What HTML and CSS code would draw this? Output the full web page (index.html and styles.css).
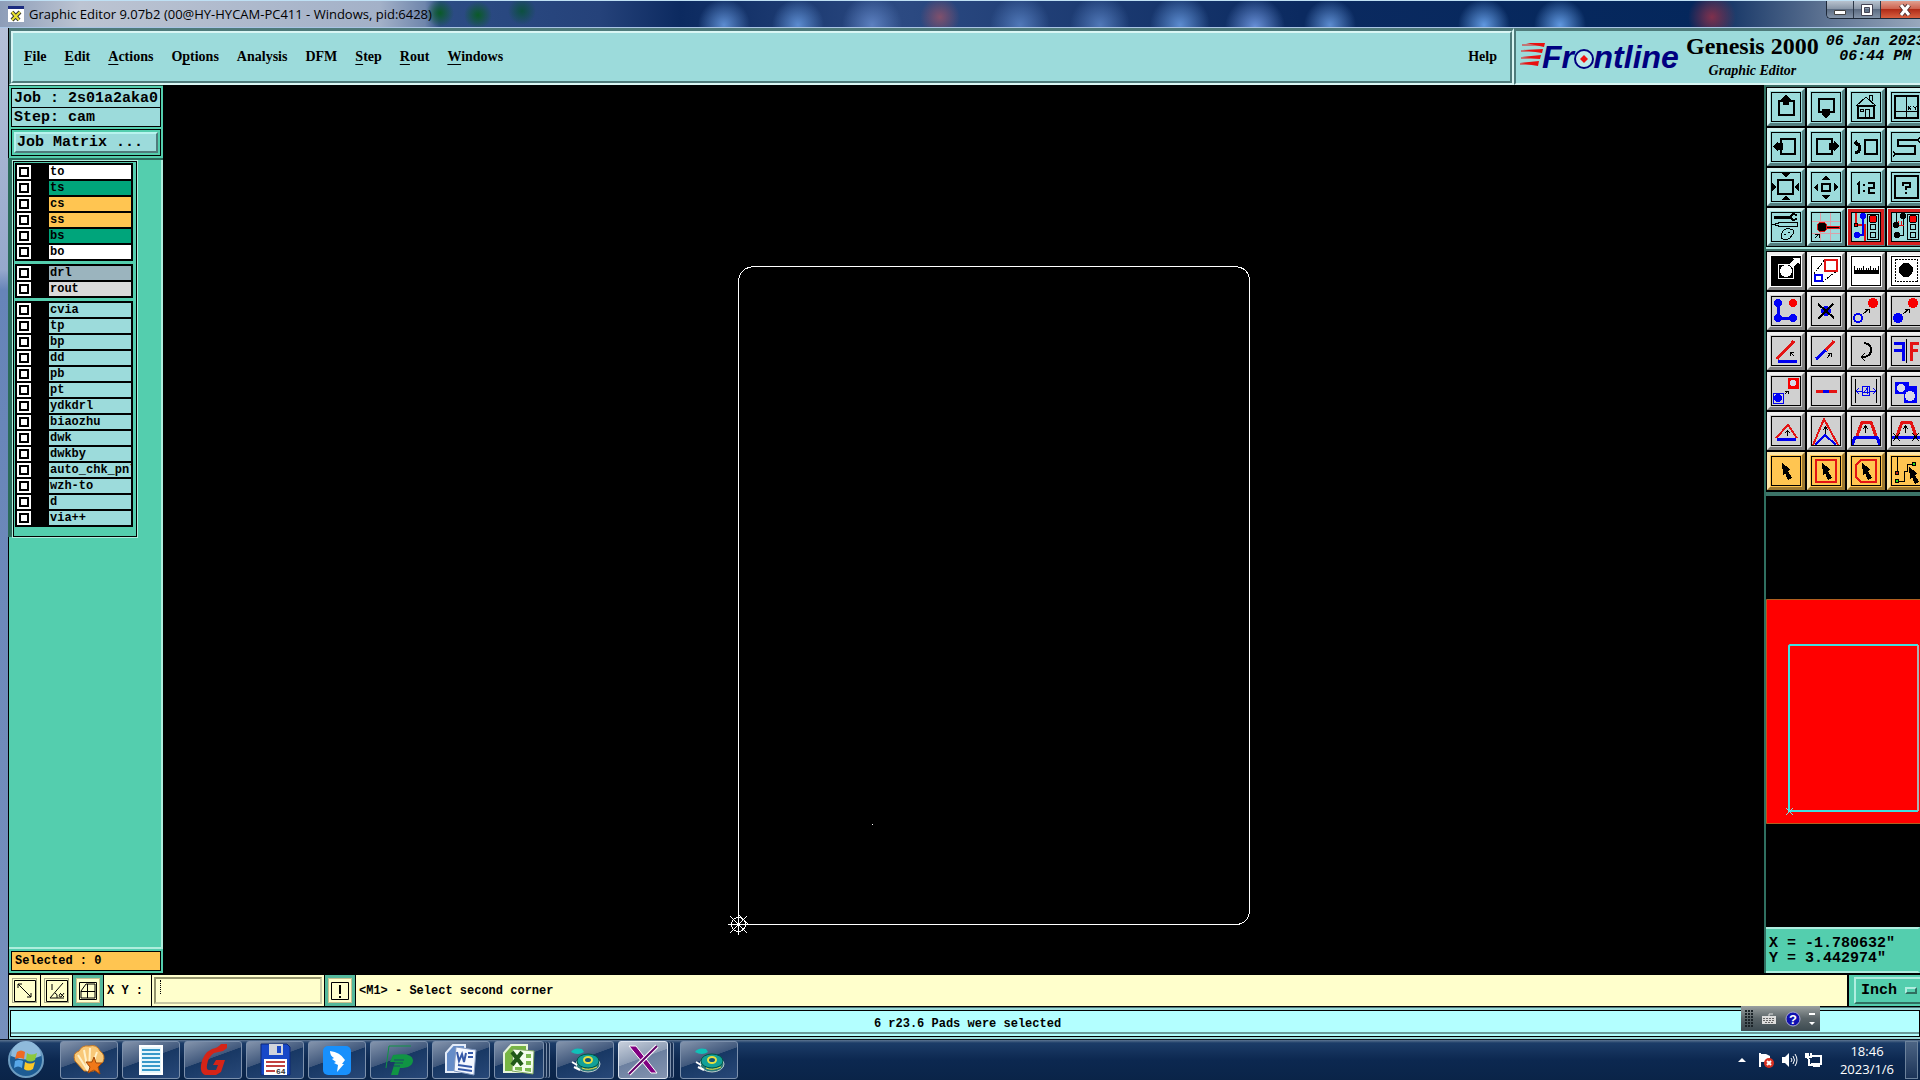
FILE: index.html
```html
<!doctype html>
<html lang="en">
<head>
  <meta charset="UTF-8">
  <meta name="viewport" content="width=device-width, initial-scale=1">
  <title>Graphic Editor 9.07b2</title>

  <link rel="stylesheet" href="styles.css">
</head>
<body>

<svg class="defs" width="0" height="0">
  <symbol id="cursor" viewBox="0 0 30 30"><path class="k" d="M11 7L19 13L17 15L21 22L17 24L14 17L12 19Z"/></symbol>
  <symbol id="disc" viewBox="0 0 34 34">
    <ellipse cx="20" cy="21" rx="12" ry="8" fill="#2a7a78" stroke="#bcc"/>
    <ellipse cx="20" cy="18" rx="11" ry="7" fill="#12a098" stroke="#054"/>
    <ellipse cx="20" cy="17" rx="4" ry="3" fill="#157" stroke="#e8e040" stroke-width="2"/>
    <path d="M3 9Q6 4 14 6L16 9Q10 13 3 9Z" fill="#10c0b8" stroke="none"/>
    <path d="M4 19L9 22M6 24L12 27" stroke="#fff" stroke-width="2"/>
    <path d="M14 25Q20 28 29 24" stroke="#e8e040" fill="none"/>
  </symbol>
</svg>

<header class="titlebar">
  <svg width="16" height="16" viewBox="0 0 16 16">
    <path fill="#fff" d="M0 0H16V16H0Z"/>
    <path fill="#1c2c80" d="M0 0H16V3H0Z"/>
    <path stroke="#333" stroke-width="4" d="M4 6L11 14M12 6L4 14"/>
    <path stroke="#e8e030" stroke-width="2" d="M4 6L11 14M12 6L4 14"/>
  </svg>
  <h1>Graphic Editor 9.07b2 (00@HY-HYCAM-PC411 - Windows, pid:6428)</h1>
  <div class="window-buttons">
    <button aria-label="Minimize"><svg width="14" height="12"><path fill="#fff" stroke="#444" d="M1.500 6.500H12.500V10.500H1.500Z"/></svg></button>
    <button aria-label="Maximize"><svg width="14" height="12"><path stroke="#fff" stroke-width="3" fill="none" d="M3 2H11V10H3Z"/><path stroke="#445" fill="none" d="M1.500 .5H12.500V11.500H1.500ZM4.500 3.500H9.500V8.500H4.500Z"/></svg></button>
    <button class="close" aria-label="Close"><svg width="14" height="12"><path stroke="#533" stroke-width="5" d="M3 1L11 11M11 1L3 11"/><path stroke="#fff" stroke-width="3" d="M3 1L11 11M11 1L3 11"/></svg></button>
  </div>
</header>

<main class="window">
  <div class="top">
    <nav class="menubar">
      <div class="menu">
        <a href="#"><u>F</u>ile</a>
        <a href="#"><u>E</u>dit</a>
        <a href="#"><u>A</u>ctions</a>
        <a href="#">O<u>p</u>tions</a>
        <a href="#">Analysis</a>
        <a href="#">DFM</a>
        <a href="#"><u>S</u>tep</a>
        <a href="#"><u>R</u>out</a>
        <a href="#"><u>W</u>indows</a>
        <a href="#" class="help">Help</a>
      </div>
    </nav>
    <div class="brand">
      <svg class="logo" width="164" height="42" viewBox="0 -6 164 42">
        <path fill="#e81010" d="M6 2L25 2L24 6ZM3 9L23 8L22 12ZM2 16L21 14L20 18ZM0 22L19 20L18 25Z"/>
        <path stroke="#e81010" d="M2 4H24M1 10H22M1 17H20M0 23H18"/>
        <text x="22" y="27">Fr<tspan class="hidden-o">o</tspan>ntline</text>
        <circle cx="64" cy="18" r="9" fill="#bdeaea" stroke="#000080" stroke-width="2"/>
        <path fill="#f01010" d="M64 14L68 18L64 22L60 18Z"/>
      </svg>
      <div class="product">
        <strong>Genesis 2000</strong>
        <em>Graphic Editor</em>
      </div>
      <time>06 Jan 2023<br>06:44 PM</time>
    </div>
  </div>

  <div class="workspace">
    <aside class="sidebar">
      <div class="job">
        <div class="field">Job : 2s01a2aka0</div>
        <div class="field">Step: cam</div>
        <div class="matrix"><button>Job Matrix ...</button></div>
      </div>
      <div class="layers">
        <div class="layer-frame">
          <div class="group">
            <label><input type="checkbox"><span class="white">to</span></label>
            <label><input type="checkbox"><span class="green">ts</span></label>
            <label><input type="checkbox"><span class="amber">cs</span></label>
            <label><input type="checkbox"><span class="amber">ss</span></label>
            <label><input type="checkbox"><span class="green">bs</span></label>
            <label><input type="checkbox"><span class="white">bo</span></label>
          </div>
          <div class="group">
            <label><input type="checkbox"><span class="slate">drl</span></label>
            <label><input type="checkbox"><span class="grey">rout</span></label>
          </div>
          <div class="group">
            <label><input type="checkbox"><span>cvia</span></label>
            <label><input type="checkbox"><span>tp</span></label>
            <label><input type="checkbox"><span>bp</span></label>
            <label><input type="checkbox"><span>dd</span></label>
            <label><input type="checkbox"><span>pb</span></label>
            <label><input type="checkbox"><span>pt</span></label>
            <label><input type="checkbox"><span>ydkdrl</span></label>
            <label><input type="checkbox"><span>biaozhu</span></label>
            <label><input type="checkbox"><span>dwk</span></label>
            <label><input type="checkbox"><span>dwkby</span></label>
            <label><input type="checkbox"><span>auto_chk_pnl</span></label>
            <label><input type="checkbox"><span>wzh-to</span></label>
            <label><input type="checkbox"><span>d</span></label>
            <label><input type="checkbox"><span>via++</span></label>
          </div>
        </div>
      </div>
      <div class="selected">Selected : 0</div>
    </aside>

    <svg class="canvas" viewBox="163 85 1601 888" preserveAspectRatio="xMinYMin meet">
      <path d="M754.500 266.500H1234.500Q1249.500 267.500 1249.500 281.500V910.500Q1248.500 923.500 1236.500 924.500H748.500L738.500 914.500V281.500Q739.500 267.500 754.500 266.500Z"/>
      <path d="M728 924.500H749M738.500 914V935M730 916L747 933M747 916L730 933"/>
      <circle cx="738.500" cy="924.500" r="7"/>
      <path d="M872 824.500H873"/>
    </svg>

    <aside class="tools">
      <div class="toolbox">
        <button><svg><path class="w2" d="M8 9H23V23H8Z"/><path class="k" d="M15 2L20 8H18V13H12V8H10Z"/></svg></button>
        <button><svg><path class="w2" d="M8 7H23V20H8Z"/><path class="k" d="M15 27L19 22V17H11V22Z"/></svg></button>
        <button><svg><path d="M5 14L15 5L25 14M18 7V3H21V9M9 17H12V19H9ZM14 26V17H18V26"/><path class="w2" d="M7 14H23V26H7Z"/></svg></button>
        <button><svg><path class="w2" d="M4 4H27V26H4Z"/><path d="M15.500 4V25M4 19.500H26"/><path d="M17 14L20 18M20 14L17 18M22 14L24 16L26 14M24 16V18"/></svg></button>

        <button><svg><path class="w2" d="M10 7H24V22H10Z"/><path class="k" d="M2 14L7 9V11H12V18H7V20Z"/></svg></button>
        <button><svg><path class="w2" d="M6 7H21V22H6Z"/><path class="k" d="M28 14L23 9V11H18V18H23V20Z"/></svg></button>
        <button><svg><path class="w2" d="M14 8H26V22H14Z"/><path class="w3" d="M4 21Q9 20 9 16Q9 12 4 11"/><path class="k" d="M2 11L6 7V15Z"/></svg></button>
        <button><svg><path class="w2" d="M27 8H7V14H24V22H4"/><path d="M27 8L29 5M27 8L29 11M4 22L2 19M4 22L2 25"/></svg></button>

        <button><svg><path class="w2" d="M7 8H22V22H7Z"/><path class="k" d="M10 1H19L15 5ZM10 28H19L15 24ZM1 10V20L5 15ZM28 10V20L24 15Z"/></svg></button>
        <button><svg><path class="w2" d="M11 12H19V19H11Z"/><path class="k" d="M10 8H19L15 4ZM10 23H19L15 27ZM7 11V20L3 15ZM23 11V20L27 15Z"/></svg></button>
        <button><svg><path class="w2" d="M6 13L8 11V22M13 12V14M13 18V20M17 11H23V16H18V21H24"/></svg></button>
        <button><svg><path class="w2" d="M4 4H27V26H4Z"/><path class="w2" d="M12 14V11H19V15H15V18M15 20V22"/></svg></button>

        <button><svg><path class="w3" d="M3 5H19"/><path class="w2" d="M26 3Q20 1 20 5Q20 9 26 7"/><path d="M3 12.500L9 10.500H26V14.500H9ZM11 21Q12 16 19 17Q25 18 22 22Q20 24 19 26Q14 29 10 26ZM13 22H15M17 20H19"/></svg></button>
        <button><svg><path class="pink" d="M9.500 1V29M19.500 1V29M1 9.500H29M1 21.500H29"/><path class="red w3" d="M16 15H29"/><path d="M16 15H28M4 26L8 22M4 22H8V26"/><circle class="fk red" cx="11" cy="15" r="5"/></svg></button>
        <button class="alert"><svg><path class="red w2" d="M5 1V13H14V29"/><path class="blue w2" d="M12 4V23H6"/><circle class="fb" cx="12" cy="4" r="3"/><circle class="fb" cx="6" cy="23" r="3"/><circle class="fr" cx="5" cy="13" r="2"/><path d="M16.500 2.500H27.500V27.500H16.500Z"/><circle class="fr" cx="22" cy="7" r="4"/><circle cx="22" cy="15" r="3"/><circle cx="22" cy="23" r="3"/></svg></button>
        <button class="alert"><svg><path d="M5.500 1V13M12.500 4V23H6"/><path class="red" d="M5 13H13M7.500 9V13M10.500 9V13"/><circle class="k" cx="12" cy="4" r="3"/><circle class="k" cx="6" cy="23" r="3"/><circle class="k" cx="5" cy="13" r="3"/><path d="M16.500 2.500H27.500V27.500H16.500Z"/><circle class="fr" cx="22" cy="7" r="4"/><circle cx="22" cy="15" r="3"/><circle cx="22" cy="23" r="3"/></svg></button>
      </div>

      <div class="toolbox edit">
        <button class="white"><svg><path class="k" d="M0 0H30V30H0Z"/><path class="white-line" d="M7.500 8.500H22.500V22.500H7.500Z"/><circle class="fw" cx="15" cy="15" r="6"/><path class="fw" d="M18 8L23 4L21 2H29V9L27 7L21 12Z"/></svg></button>
        <button class="white"><svg><path stroke-dasharray="2 1" d="M3 18L14 3M11 26L26 15"/><path class="red w2" d="M14 4H26V15H14Z"/><path class="blue w2" d="M4 19H11V25H4Z"/></svg></button>
        <button class="white"><svg><path class="k" d="M3 14H28V18H3Z"/><path d="M3.500 10V15M6.500 12V15M8.500 12V15M10.500 12V15M12.500 10V15M15.500 12V15M17.500 12V15M19.500 10V15M22.500 12V15M24.500 12V15M27.500 10V15"/></svg></button>
        <button class="white"><svg><path stroke-dasharray="2 1" d="M4.500 3.500H26.500V25.500H4.500Z"/><circle class="k" cx="15" cy="14" r="7"/></svg></button>

        <button><svg><path class="blue w3" d="M7 7V22H22"/><circle class="fb" cx="7" cy="7" r="4"/><circle class="fb" cx="7" cy="22" r="4"/><circle class="fb" cx="22" cy="22" r="4"/><circle class="fr" cx="22" cy="7" r="4"/></svg></button>
        <button><svg><circle class="fb" cx="15" cy="15" r="5"/><path class="w2" d="M7 8L23 22M22 8L7 23"/></svg></button>
        <button><svg><circle class="blue w2" cx="7" cy="22" r="4"/><circle class="fr" cx="22" cy="7" r="5"/><path d="M12 18L18 13M14 13H18V17"/></svg></button>
        <button><svg><circle class="fb" cx="7" cy="22" r="5"/><circle class="fr" cx="22" cy="7" r="5"/><path d="M12 18L18 13M14 13H18V17"/></svg></button>

        <button><svg><path class="red w3" d="M6 23L23 5"/><path class="blue w3" d="M7 25H26"/><path d="M23 20L19 16M19 20V16H23"/></svg></button>
        <button><svg><path class="blue w3" d="M5 23L15 14"/><path class="red w3" d="M15 14L23 5"/><path d="M16 22L20 17M17 17H20V21"/></svg></button>
        <button><svg><path class="w2" d="M13 7Q21 8 20 15Q19 21 11 21"/><path d="M14 17L10 21L14 25"/></svg></button>
        <button><svg><path class="blue w3" d="M3 7H12V25M3 14H12"/><path d="M15.500 3V27"/><path class="red w3" d="M20 25V7H28M20 14H27"/></svg></button>

        <button><svg><path class="blue" d="M2.500 17.500H12.500V27.500H2.500Z"/><circle class="fb" cx="7" cy="22" r="4"/><path class="fr" d="M17 2H28V13H17Z"/><circle class="fg" cx="22" cy="7" r="3"/><path d="M14 18L17 15M14 15H17V18"/></svg></button>
        <button><svg><path class="red w3" d="M5 15H26"/><path class="blue w3" d="M12 15H18"/></svg></button>
        <button><svg><path d="M4.500 3V27M25.500 3V27"/><path class="blue" d="M11.500 10.500H18.500V19.500H11.500ZM16.500 18V12L13 16H18M5 15.500H11M19 15.500H25M8 12L5 15L8 18M22 12L25 15L22 18"/></svg></button>
        <button><svg><path class="fb" d="M4 6H18V10H26V27H13V18H4Z"/><circle class="fg" cx="10" cy="12" r="4"/><circle class="fg" cx="19" cy="20" r="5"/></svg></button>

        <button><svg><path class="red w2" d="M5 22L17 9L26 22"/><path class="blue w3" d="M6 23H25"/><path d="M16.500 20V15M14 17L16.500 15L19 17"/></svg></button>
        <button><svg><path class="red w2" d="M2 29L13 3L27 29"/><path class="blue w2" d="M4 29L14 19L25 29"/><path d="M14.500 18V11M12 14L14.500 11L17 14"/></svg></button>
        <button><svg><path class="red w3" d="M6 20L11 6H20L25 20"/><path class="blue w3" d="M1 29L4 21H26L29 29"/><path d="M14.500 17V10M12 13L14.500 10L17 13"/></svg></button>
        <button><svg><path class="red w3" d="M6 20L11 6H20L25 20"/><path class="blue w3" d="M1 21H30"/><path d="M14.500 17V10M12 13L14.500 10L17 13M2 17L9 25M9 17L2 25M21 17L28 25M28 17L21 25"/></svg></button>

        <button class="amber"><svg><use href="#cursor"/></svg></button>
        <button class="amber"><svg><path class="red w2" d="M5 4H25V26H5Z"/><use href="#cursor"/></svg></button>
        <button class="amber"><svg><path class="red w2" d="M10 4H25V26H10L5 21V9Z"/><use href="#cursor"/></svg></button>
        <button class="amber"><svg><path d="M6.500 1V16M6 25H13V15H16V8H23"/><circle class="maroon" cx="6" cy="17" r="2"/><circle class="lime" cx="6" cy="25" r="2"/><circle class="lime" cx="23" cy="8" r="2"/><use href="#cursor" x="7" y="4"/></svg></button>
      </div>

      <svg class="overview">
        <path fill="#f00" stroke="#b06020" d="M.5 103.500H170V327.500H.5Z"/>
        <path fill="none" stroke="#40e0e0" stroke-width="2" d="M152 149H24L23 150V315H152"/>
        <path stroke="#b0b0b0" stroke-width="2" d="M152 149V315"/>
        <path stroke="#80e0e0" d="M20 312L27 319M27 312L20 319"/>
      </svg>

      <div class="position">X = -1.780632"<br>Y = 3.442974"</div>
    </aside>
  </div>

  <form class="command">
    <button type="button"><svg width="22" height="22"><path d="M.5 .5H21.500V21.500H.5ZM4 4L17 17M4 8V4H8M17 13V17H13"/></svg></button>
    <button type="button"><svg width="22" height="22"><path d="M.5 .5H21.500V21.500H.5ZM17 3L4 18H18M6 4V10M9 13Q12 14 11 18M14 14Q12 17 15 17L18 13M14 13L18 17"/></svg></button>
    <button type="button" class="framed"><svg width="18" height="18"><path d="M.5 .5H17.500V17.500H.5ZM8.500 2V16M2 9.500H16M2 9V16H16V2H7Z"/></svg></button>
    <label for="xy">X Y :</label>
    <div class="entry"><input type="text" id="xy"><i></i></div>
    <button type="button" class="framed"><svg width="18" height="18"><path d="M.5 .5H17.500V17.500H.5Z"/><path class="w2" d="M9 3V12M9 14V16"/></svg></button>
    <output>&lt;M1&gt; - Select second corner</output>
    <div class="units"><button type="button">Inch <b></b></button></div>
  </form>

  <div class="message"><p>6 r23.6 Pads were selected</p></div>
</main>

<div class="langbar">
  <i class="grip"></i>
  <svg width="16" height="12"><path fill="#ddd" d="M1 3H15V11H1Z"/><path stroke="#666" stroke-dasharray="2 1" d="M2 5.500H14M2 7.500H14M4 9.500H12"/><path stroke="#ddd" d="M8 3V1H12"/></svg>
  <svg width="16" height="16"><circle cx="8" cy="8" r="7" fill="#1010b0" stroke="#aac"/><text x="8" y="13" text-anchor="middle">?</text></svg>
  <svg width="6" height="14"><path fill="#fff" d="M0 1H6V3H0ZM0 10H6L3 13Z"/></svg>
</div>

<footer class="taskbar">
  <button class="start" aria-label="Start">
    <svg width="38" height="38" viewBox="0 0 38 38">
      <circle cx="19" cy="19" r="17" fill="#1d5c94" stroke="#6d9cc0" stroke-width="2"/>
      <path fill="#8fbadb" d="M4 15A15 15 0 0 1 34 15Q19 22 4 15Z"/>
      <path fill="#ee6a24" d="M10 11Q14 8 18 11L17 18Q13 16 8 18Z"/>
      <path fill="#8cc83c" d="M20 12Q24 15 30 12L28 19Q23 22 19 19Z"/>
      <path fill="#58a8e8" d="M8 20Q12 18 16 20L15 27Q11 24 7 27Z"/>
      <path fill="#fcc828" d="M18 21Q23 24 28 21L26 28Q21 31 17 28Z"/>
    </svg>
  </button>
  <button class="task"><svg><path fill="#f8c878" stroke="#c87820" d="M3 18Q0 10 7 8Q10 2 17 3Q25 1 28 8Q34 12 31 19L22 28H12Z"/><path stroke="#fff0c8" stroke-width="2" d="M16 28L6 12M16 28L12 7M17 28L18 5M18 28L25 9"/><path fill="#f07818" stroke="#a04808" d="M22 14L24 20L30 20L26 24L28 31L22 27L16 30L18 24L14 19L20 19Z"/></svg></button>
  <button class="task"><svg><path fill="#e4f6fc" stroke="#fff" stroke-width="2" d="M6 3H28V31H6Z"/><path stroke="#3898c8" stroke-width="2" d="M8 7H26M8 11H26M8 15H26M8 19H26M8 23H26M8 27H26"/></svg></button>
  <button class="task"><svg><path fill="#d42418" d="M31 1V5L27 8L18 10Q12 14 11 22Q10 27 13 27H20L22 22H17L20 17H29L25 29L20 32H9Q4 30 5 22Q7 10 16 6Q22 5 25 1Z"/></svg></button>
  <button class="task"><svg><path fill="#1848c8" stroke="#0c2878" d="M3 1H29L32 4V32H3Z"/><path fill="#d0d4dc" d="M11 1H25V12H11Z"/><path fill="#1848c8" d="M19 3H23V10H19Z"/><path fill="#fff" d="M6 16H29V32H6Z"/><path stroke="#c04040" stroke-width="2" d="M8 19H27M8 23H27M8 28H17"/><text x="18" y="31" font-size="8">64</text></svg></button>
  <button class="task"><svg><rect x="3" y="3" width="28" height="29" rx="5" fill="#1890fc"/><path fill="#fff" d="M10 8Q20 9 25 17L22 21H24L17 29L18 22L14 20L16 19L12 16L14 15Q10 13 10 8Z"/></svg></button>
  <button class="task"><svg><path fill="#109444" d="M11 12Q30 9 31 17Q31 25 18 25L16 32H9L13 19H8Z"/><path stroke="#109444" d="M29 3H7L4 25"/><path stroke="#1c4868" d="M12 17H22M12 20H21M12 23H18"/></svg></button>
  <button class="task"><svg><path fill="#668dc8" stroke="#e4ecf8" stroke-width="2" d="M2 29V10L9 2H21V29Z"/><path fill="#f4f8ff" stroke="#8098c0" d="M12 4L32 7L30 32L10 28Z"/><path stroke="#3458a8" stroke-width="2" d="M13 9L15 18L18 11L20 19L22 10M24 10H29M24 14H29M14 22L28 24M14 26L28 28"/></svg></button>
  <button class="task stacked"><svg><path fill="#77b544" stroke="#e8f4dc" stroke-width="2" d="M2 29V10L9 2H25V29Z"/><path fill="#f4fcec" stroke="#80a860" d="M11 6L32 8L31 31L10 28Z"/><path fill="#7cb850" d="M24 11H29V15H24ZM24 18H29V22H24ZM13 24H20V28L13 27ZM23 25H29V29L23 28Z"/><path stroke="#205818" stroke-width="4" d="M10 9L20 22M20 9L10 22"/></svg></button>
  <button class="task"><svg><use href="#disc"/></svg></button>
  <button class="task stacked active"><svg><path fill="#800080" stroke="#fff" d="M3 3H10L31 30H25Z"/><path stroke="#fff" stroke-width="4" d="M31 3L3 31"/><path stroke="#600068" stroke-width="2" d="M31 3L3 31"/></svg></button>
  <button class="task"><svg><use href="#disc"/></svg></button>

  <div class="tray">
    <svg width="18" height="18"><path fill="#fff" d="M5 11L9 7L13 11Z"/></svg>
    <svg width="18" height="18"><path stroke="#fff" stroke-width="2" d="M3 2V16"/><path fill="#fff" d="M4 3H9L13 5V11H4Z"/><circle cx="12" cy="12" r="5" fill="#d83020"/><path stroke="#fff" stroke-width="2" d="M10 10L14 14M14 10L10 14"/></svg>
    <svg width="18" height="18"><path fill="#fff" d="M1 6H4L8 2V16L4 12H1Z"/><path stroke="#fff" fill="none" d="M10 7Q12 9 10 11M12 5Q15 9 12 13M14 3Q18 9 14 15"/></svg>
    <svg width="18" height="18"><path fill="none" stroke="#fff" stroke-width="2" d="M6 5H16V13H6M3 2V8M6 2V6H1V2M4 8V14H10M8 15H15"/></svg>
    <time>18:46<br>2023/1/6</time>
    <button class="show-desktop" aria-label="Show desktop"></button>
  </div>
</footer>

</body>
</html>
```
FILE: styles.css
```css
* {
    margin: 0;
    padding: 0;
    box-sizing: border-box;
}

body {
    height: 100vh;
    display: flex;
    flex-direction: column;
    overflow: hidden;
    background: linear-gradient(#b9c3d9 0, #96a8cc 270px, #6684b8 290px, #7790bd);
    font-family: "Liberation Mono", monospace;
    font-weight: bold;
    color: #000;
}

button, input {
    font: inherit;
    color: inherit;
}

button {
    cursor: pointer;
}

svg {
    display: block;
    flex: none;
    fill: none;
}

.defs {
    position: absolute;
}

/* title bar */

.titlebar {
    height: 28px;
    flex: none;
    display: flex;
    align-items: center;
    gap: 5px;
    padding-left: 8px;
    border-top: 1px solid #bfe0f4;
    border-bottom: 1px solid #a9c4e4;
    background:
        radial-gradient(circle at 440px 12px, #0a5a28, transparent 14px),
        radial-gradient(circle at 478px 14px, #0a5a28, transparent 14px),
        radial-gradient(circle at 522px 10px, #0c5040, transparent 14px),
        radial-gradient(circle at 724px 24px, #5c8cd0, transparent 26px),
        radial-gradient(circle at 798px 24px, #5c8cd0, transparent 26px),
        radial-gradient(circle at 872px 24px, #5c80c0, transparent 30px),
        radial-gradient(circle at 940px 16px, #80506c, transparent 20px),
        radial-gradient(circle at 1020px 24px, #5078b8, transparent 30px),
        radial-gradient(circle at 1100px 24px, #5078b8, transparent 30px),
        radial-gradient(circle at 1180px 24px, #5c8cd0, transparent 30px),
        radial-gradient(circle at 1255px 26px, #6890d8, transparent 30px),
        radial-gradient(circle at 1330px 24px, #5c8cd0, transparent 26px),
        radial-gradient(circle at 1484px 24px, #6098e0, transparent 26px),
        radial-gradient(circle at 1560px 24px, #6098e0, transparent 26px),
        radial-gradient(circle at 1712px 16px, #80304c, transparent 24px),
        linear-gradient(90deg, #8d9db8, #bcc4d2 80px, #a3b1c8 380px, #6f86ac 425px, #2c4c84 440px, #25427a 600px, #0c2a60 680px, #2c4a82 900px, #0b2a60 1300px, #04275c 1700px, #5a7090 1820px, #98a8bc);
}

.titlebar h1 {
    flex: 1;
    font: 13px "Open Sans", sans-serif;
    white-space: nowrap;
}

.window-buttons {
    align-self: flex-start;
    display: flex;
    height: 18px;
    border: 1px solid #1c2838;
    border-top: 0;
    border-right: 0;
    border-radius: 0 0 0 5px;
    overflow: hidden;
}

.window-buttons button {
    width: 27px;
    display: grid;
    place-items: center;
    border: 0;
    border-right: 1px solid #2c3848;
    background: linear-gradient(#b8c2ce, #8492a4 50%, #5c6c82 50%, #8494a8);
}

.window-buttons .close {
    width: 39px;
    padding-left: 8px;
    border: 0;
    background: linear-gradient(#e0a090, #cc5c48 50%, #b02c18 50%, #d86040);
}

/* application window */

.window {
    flex: 1;
    min-height: 0;
    margin-left: 8px;
    display: flex;
    flex-direction: column;
    border-left: 1px solid #000;
    background: #000;
}

.top {
    flex: none;
    display: flex;
    height: 57px;
    background: #9cdbdb;
}

.menubar, .brand {
    border: solid #4f7b7b;
    border-width: 3px 2px 2px;
    border-bottom-color: #d9f6f4;
    border-right-color: #d9f6f4;
}

.menubar {
    flex: 1;
}

.menu {
    height: 100%;
    display: flex;
    align-items: center;
    gap: 18px;
    padding: 0 13px 0 11px;
    border: 2px solid;
    border-color: #d9f6f4 #4f7b7b #4f7b7b #d9f6f4;
}

.menu a {
    color: #000;
    font: bold 14px "Liberation Serif", serif;
    text-decoration: none;
}

.menu u {
    text-underline-offset: 3px;
}

.menu .help {
    margin-left: auto;
}

.brand {
    width: 406px;
    display: flex;
    justify-content: flex-start;
    gap: 2px;
    padding-left: 4px;
    overflow: hidden;
    border-right: 0;
    white-space: nowrap;
    font-family: "Liberation Serif", serif;
}

.logo {
    margin-top: 4px;
}

.logo text {
    font: italic bold 32px "Liberation Sans", sans-serif;
    fill: #000080;
}

.logo .hidden-o {
    fill: none;
}

.product {
    display: flex;
    flex-direction: column;
    align-items: center;
}

.product strong {
    font-size: 24px;
    line-height: 30px;
}

.product em {
    font-size: 14px;
    line-height: 20px;
}

.brand time {
    margin: 3px 0 0 5px;
    font: italic bold 15px/15px "Liberation Mono", monospace;
    text-align: center;
}

.workspace {
    flex: 1;
    min-height: 0;
    display: flex;
}

/* left panel */

.sidebar {
    width: 154px;
    flex: none;
    display: flex;
    flex-direction: column;
    background: #54ceae;
    border-top: 1px solid #1d4c40;
}

.job {
    padding: 2px 2px 2px;
    border-bottom: 2px solid #2b6b5b;
}

.field {
    height: 20px;
    border: 1px solid #000;
    background: #9cdbdb;
    font-size: 15px;
    line-height: 19px;
    white-space: nowrap;
    padding-left: 2px;
}

.field + .field {
    margin-top: -1px;
}

.matrix {
    margin-top: 2px;
    padding: 2px;
    border: 1px solid #000;
}

.matrix button {
    width: 100%;
    height: 21px;
    border: 2px solid;
    border-color: #b8f4ee #4f7b7b #4f7b7b #b8f4ee;
    background: #9cdbdb;
    font-size: 15px;
    line-height: 16px;
    text-align: left;
    padding-left: 1px;
}

.layers {
    flex: 1;
    min-height: 0;
    padding: 1px 24px 0 0;
    border: 2px solid #aeeedd;
    border-width: 0 2px 2px 0;
}

.layer-frame {
    padding: 1px 3px 9px 1px;
    border: 1px solid #000;
    outline: 1px solid #aeeedd;
    box-shadow: -5px 0 0 #2b6b5b, -5px -3px 0 #2b6b5b;
    margin-left: 4px;
}

.group {
    padding: 2px 2px 0;
    background: #000;
}

.group + .group {
    margin-top: 3px;
}

.group label {
    display: flex;
    gap: 18px;
    padding-bottom: 2px;
}

.group input {
    appearance: none;
    width: 14px;
    height: 14px;
    flex: none;
    border: 2px solid #fff;
    background: #fff;
    box-shadow: inset 0 0 0 2px #000;
}

.group span {
    flex: 1;
    min-width: 0;
    height: 14px;
    padding-left: 1px;
    overflow: hidden;
    background: #9cdbdb;
    font-size: 12px;
    line-height: 14px;
}

.group .white {
    background: #fff;
}

.group .green {
    background: #00a57b;
}

.group .amber {
    background: #ffc551;
}

.group .slate {
    background: #9bb4be;
}

.group .grey {
    background: #dadada;
}

.selected {
    height: 20px;
    margin: 2px;
    padding-left: 3px;
    border: 1px solid #000;
    background: #ffc551;
    font-size: 12px;
    line-height: 18px;
}

/* drawing area */

.canvas {
    flex: 1;
    min-width: 0;
    height: 100%;
    stroke: #fff;
    shape-rendering: crispEdges;
}

/* right panel */

.tools {
    width: 156px;
    flex: none;
    display: flex;
    flex-direction: column;
    overflow: hidden;
    border-left: 2px solid #2f6f60;
}

.toolbox {
    display: grid;
    grid-template-columns: repeat(4, 38px);
    gap: 2px;
    padding: 1px;
    border-top: 2px solid #3c6c64;
    border-bottom: 2px solid #a8e8e0;
}

.toolbox.edit {
    padding-bottom: 2px;
    border-bottom: 4px solid #3c7468;
}

.toolbox button {
    width: 38px;
    height: 38px;
    border: 3px solid;
    border-color: #d4f4f2 #557f80 #557f80 #d4f4f2;
    padding: 1px;
    background: #9cdbdb;
}

.toolbox.edit button {
    border-color: #f0f0f0 #828282 #828282 #f0f0f0;
    background: #d0d0d0;
}

.toolbox.edit .white {
    background: #fff;
}

.toolbox.edit .amber {
    border-color: #ffe7a8 #9c7830 #9c7830 #ffe7a8;
    background: #ffc551;
}

.toolbox .alert {
    border-width: 1px;
    padding: 3px;
    background: #d82020;
}

.alert svg {
    background: #9cdbdb;
}

.toolbox svg {
    width: 30px;
    height: 30px;
    outline: 1px solid #000;
    outline-offset: -1px;
    stroke: #000;
    shape-rendering: crispEdges;
}

.w2 {
    stroke-width: 2;
}

.w3 {
    stroke-width: 3;
}

.k {
    fill: #000;
    stroke: none;
}

.fk {
    fill: #000;
}

.red {
    stroke: #e41414;
}

.blue {
    stroke: #0000f0;
}

.pink {
    stroke: #dca0a8;
}

.fr {
    fill: #f80000;
}

.fb {
    fill: #0000f8;
    stroke: none;
}

.fw {
    fill: #fff;
    stroke: none;
}

.fg {
    fill: #d8d8e8;
    stroke: none;
}

.white-line {
    stroke: #fff;
}

.maroon {
    fill: #c02010;
}

.lime {
    fill: #20d820;
}

.edit .fr {
    stroke: none;
}

.overview {
    flex: 1;
    width: 100%;
    min-height: 0;
}

.position {
    height: 46px;
    padding: 7px 0 0 3px;
    border: 2px solid;
    border-color: #b0eee0 transparent #b0eee0 transparent;
    border-left: 0;
    background: #54ceae;
    font-size: 15px;
    line-height: 15px;
    white-space: nowrap;
}

/* command line */

.command {
    flex: none;
    height: 34px;
    display: flex;
    gap: 1px;
    padding: 2px 0 1px;
}

.command > button {
    width: 31px;
    display: grid;
    place-items: center;
    border: 2px solid #ffffcc;
    outline: 1px solid #a8a888;
    outline-offset: -4px;
    background: #ffffcc;
}

.command > .framed {
    width: 30px;
    border: 3px solid #54b89c;
    outline-color: #c8c090;
}

.command svg {
    stroke: #000;
}

.command label {
    width: 47px;
    padding-left: 3px;
    background: #ffffcc;
    font-size: 12px;
    line-height: 32px;
    white-space: nowrap;
}

.entry {
    position: relative;
    width: 172px;
    padding: 2px;
    background: #ffffcc;
}

.entry input {
    width: 100%;
    height: 27px;
    padding-left: 6px;
    border: 2px solid;
    border-color: #94946c #c8c8a4 #c8c8a4 #94946c;
    background: #ffffcc;
    font-size: 12px;
}

/* idle text cursor */
.entry i {
    position: absolute;
    left: 8px;
    top: 5px;
    height: 14px;
    border-left: 1px dotted #000;
}

.command output {
    flex: 1;
    padding-left: 3px;
    background: #ffffcc;
    font-size: 12px;
    line-height: 32px;
}

.units {
    width: 71px;
    padding: 2px 0 2px 5px;
    margin-left: 1px;
    overflow: hidden;
    background: #54ceae;
}

.units button {
    width: 76px;
    height: 27px;
    display: flex;
    align-items: center;
    gap: 8px;
    padding-left: 5px;
    border: 2px solid;
    border-color: #b0eee0 #2f6f60 #2f6f60 #b0eee0;
    background: #54ceae;
    font-size: 15px;
}

.units b {
    width: 12px;
    height: 7px;
    border: 2px solid;
    border-color: #b0eee0 #2f6f60 #2f6f60 #b0eee0;
}

.message {
    flex: none;
    padding: 2px 0 2px 1px;
    background: #9cdbdb;
    border-top: 1px solid #4f7b7b;
}

.message p {
    height: 27px;
    padding-left: 5px;
    border: 1px solid #000;
    background: #b3ffff;
    box-shadow: inset 0 -2px 0 #b3ffff, inset 0 -4px 0 #6a9a9a;
    font-size: 12px;
    line-height: 26px;
    text-align: center;
}

/* windows taskbar */

.langbar {
    position: absolute;
    right: 100px;
    bottom: 49px;
    width: 79px;
    height: 25px;
    display: flex;
    align-items: center;
    justify-content: space-between;
    padding: 0 5px 0 4px;
    background: linear-gradient(#9aa0a0, #5a6468 50%, #3c4a50);
}

.langbar .grip {
    width: 8px;
    height: 17px;
    background: radial-gradient(circle at 1px 1px, #1c2428 1px, transparent 1px) 0 0 / 3px 3px;
}

.langbar text {
    fill: #fff;
    font: bold 13px "Liberation Sans", sans-serif;
}

.taskbar {
    flex: none;
    height: 41px;
    display: flex;
    align-items: center;
    gap: 4px;
    padding-left: 7px;
    border-top: 1px solid #0c1420;
    background: linear-gradient(#5c7490, #1c3c68 3px, #0c2850 50%, #0a2448);
}

.taskbar button {
    flex: none;
    border: 0;
    background: none;
}

.taskbar .start {
    width: 49px;
}

.taskbar .task {
    width: 58px;
    height: 38px;
    display: grid;
    place-items: center;
    border: 1px solid #7c90ac;
    border-radius: 3px;
    background: linear-gradient(160deg, #8494ac, #40587c 45%, #183864 46%, #284878);
}

.taskbar .stacked {
    width: 50px;
    margin-right: 8px;
    box-shadow: 3px 0 0 -1px #183054, 4px 0 0 -1px #7c90ac, 6px 0 0 -1px #183054, 7px 0 0 -1px #7c90ac;
}

.taskbar .active {
    border-color: #dce4f0;
    background: linear-gradient(160deg, #c8d0dc, #8c9cb4 45%, #6c80a0 46%, #8494b0);
}

.task svg {
    width: 34px;
    height: 34px;
}

.task text {
    fill: #333;
}

.tray {
    flex: 1;
    display: flex;
    justify-content: flex-end;
    align-items: center;
    gap: 6px;
    padding-right: 2px;
    color: #fff;
}

.tray time {
    width: 64px;
    margin-left: 6px;
    font: 13px/18px "Open Sans", sans-serif;
    text-align: center;
}

.taskbar .show-desktop {
    width: 13px;
    height: 38px;
    border: 1px solid #6c829c;
    background: linear-gradient(#4c6484, #1c3458);
}
```
